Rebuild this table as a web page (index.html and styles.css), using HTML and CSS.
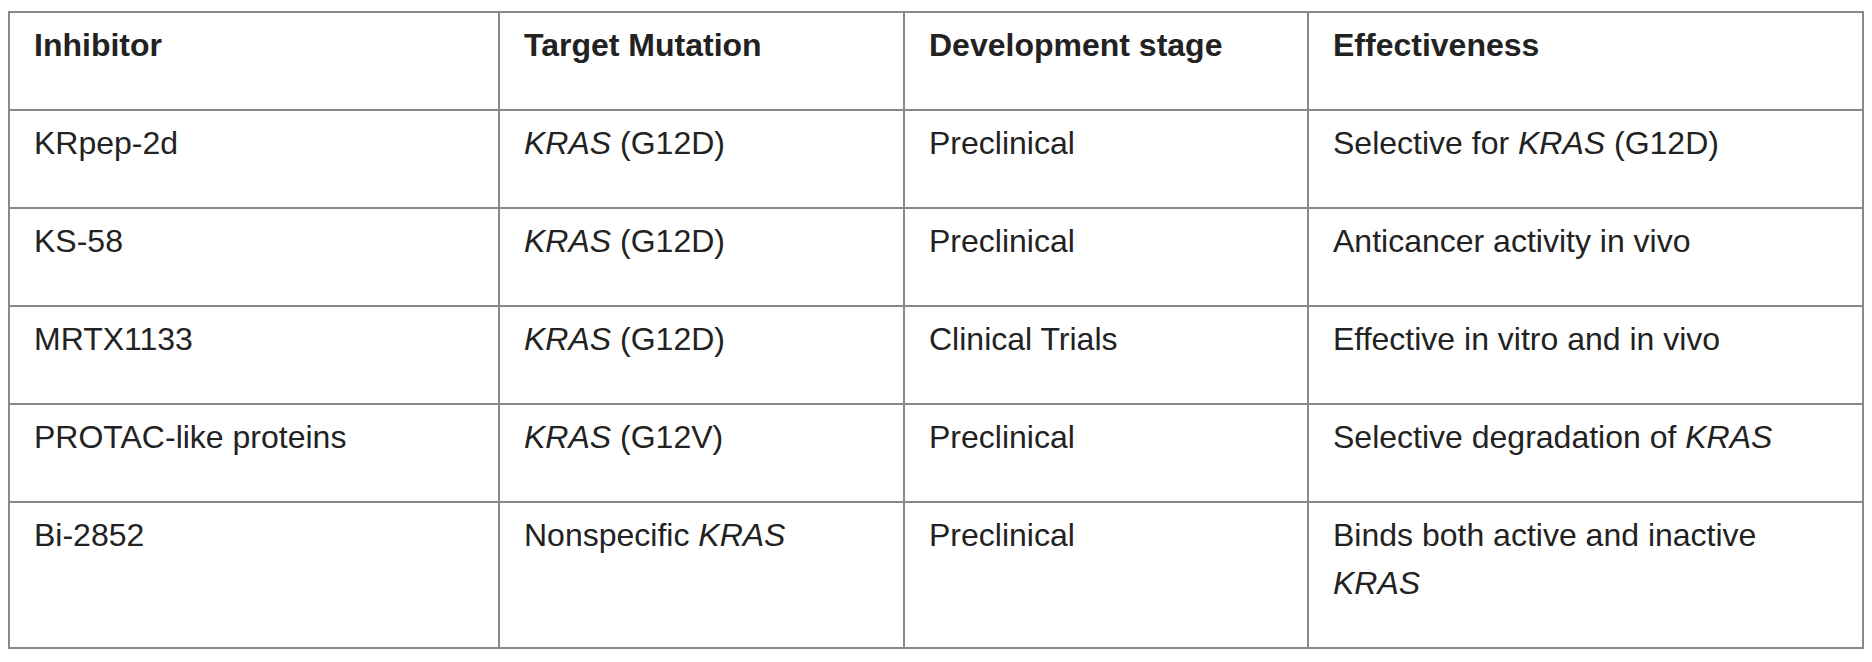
FILE: index.html
```html
<!DOCTYPE html>
<html lang="en">
<head>
<meta charset="utf-8">
<title>KRAS inhibitors</title>
<link rel="stylesheet" href="styles.css">
</head>
<body>
<table class="data-table">
  <colgroup>
    <col class="c1">
    <col class="c2">
    <col class="c3">
    <col class="c4">
  </colgroup>
  <thead>
    <tr>
      <th>Inhibitor</th>
      <th>Target Mutation</th>
      <th>Development stage</th>
      <th>Effectiveness</th>
    </tr>
  </thead>
  <tbody>
    <tr>
      <td>KRpep-2d</td>
      <td><i>KRAS</i> (G12D)</td>
      <td>Preclinical</td>
      <td>Selective for <i>KRAS</i> (G12D)</td>
    </tr>
    <tr>
      <td>KS-58</td>
      <td><i>KRAS</i> (G12D)</td>
      <td>Preclinical</td>
      <td>Anticancer activity in vivo</td>
    </tr>
    <tr>
      <td>MRTX1133</td>
      <td><i>KRAS</i> (G12D)</td>
      <td>Clinical Trials</td>
      <td>Effective in vitro and in vivo</td>
    </tr>
    <tr>
      <td>PROTAC-like proteins</td>
      <td><i>KRAS</i> (G12V)</td>
      <td>Preclinical</td>
      <td>Selective degradation of <i>KRAS</i></td>
    </tr>
    <tr>
      <td>Bi-2852</td>
      <td>Nonspecific <i>KRAS</i></td>
      <td>Preclinical</td>
      <td>Binds both active and inactive <i>KRAS</i></td>
    </tr>
  </tbody>
</table>
</body>
</html>
```

FILE: styles.css
```css
html, body {
  background: #ffffff;
}
body {
  margin: 8px;
  font-family: "Liberation Sans", Arial, Helvetica, sans-serif;
  color: #222222;
}
.data-table {
  margin-top: 3px;
  width: 1854px;
  border-collapse: collapse;
  table-layout: fixed;
  font-size: 32px;
  line-height: 48px;
}
.c1 { width: 490px; }
.c2 { width: 405px; }
.c3 { width: 404px; }
.c4 { width: 555px; }
.data-table th,
.data-table td {
  border: 2px solid #898989;
  padding: 8px 24px 40px 24px;
  text-align: left;
  vertical-align: top;
}
.data-table th {
  font-weight: bold;
}
.data-table i {
  font-style: italic;
}
```
